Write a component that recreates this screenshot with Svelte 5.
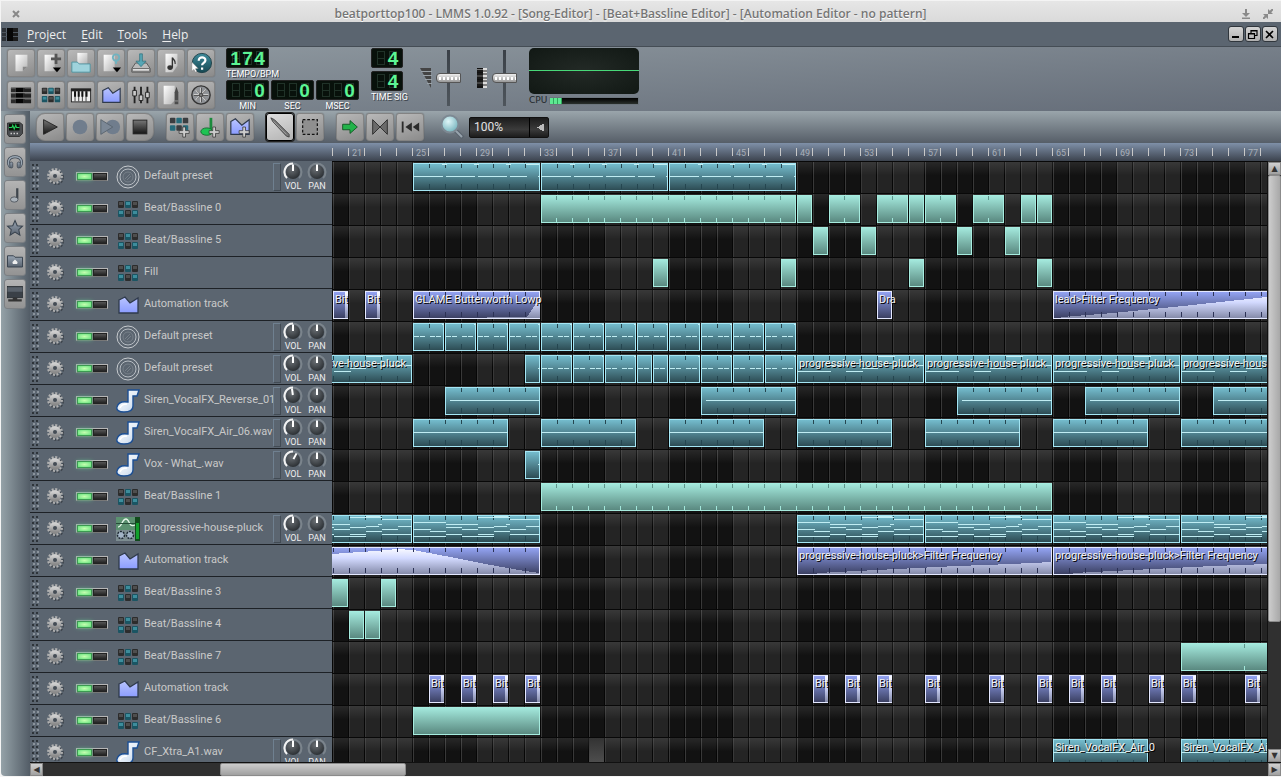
<script lang="ts">
  type Kind = "note" | "bb" | "auto";
  type Clip = {
    from: number;
    to: number;
    kind: Kind;
    art?: string;
    label?: string;
    tick?: number;
  };
  type Track = { name: string; icon: string; vol?: number; clips: Clip[]; cursor?: number };

  const BAR = 16;
  const FIRST_BAR = 20;

  const n = (from: number, to: number, art: string, label = ""): Clip => ({ from, to, kind: "note", art, label, tick: 1 });
  const b = (from: number, to: number, tick = 1): Clip => ({ from, to, kind: "bb", tick });
  const a = (from: number, to: number, art: string, label = ""): Clip => ({ from, to, kind: "auto", art, label, tick: 1 });
  const every = (starts: number[], len: number, art: string) => starts.map((s) => n(s, s + len, art));
  const bits = (starts: number[]) => starts.map((s) => a(s, s + 1, "bit", "Bit"));

  const pluck = "progressive-house-pluck";

  let tracks: Track[] = [
    { name: "Default preset", icon: "preset", vol: 0, clips: every([25, 33, 41], 8, "long") },
    {
      name: "Beat/Bassline 0",
      icon: "beat",
      clips: [b(33, 49), b(49, 50), b(51, 53), b(54, 56), b(56, 57), b(57, 59), b(60, 62), b(63, 64), b(64, 65)],
    },
    { name: "Beat/Bassline 5", icon: "beat", clips: [50, 53, 59, 62].map((s) => b(s, s + 1)) },
    { name: "Fill", icon: "beat", clips: [40, 48, 56, 64].map((s) => b(s, s + 1)) },
    {
      name: "Automation track",
      icon: "auto",
      clips: [
        ...bits([20, 22]),
        a(25, 33, "glame", "GLAME Butterworth Lowp"),
        a(54, 55, "", "Dra"),
        a(65, 81, "lead", "lead>Filter Frequency"),
      ],
    },
    {
      name: "Default preset",
      icon: "preset",
      vol: 0,
      clips: every([25, 27, 29, 31, 33, 35, 37, 39, 41, 43, 45, 47], 2, "short"),
    },
    {
      name: "Default preset",
      icon: "preset",
      vol: 0,
      clips: [
        n(17, 25, "pluck", pluck),
        n(32, 33, "dot"),
        ...every([33, 35, 37], 2, "short"),
        ...every([39, 40], 1, "half"),
        ...every([41, 43, 45, 47], 2, "short"),
        ...[49, 57, 65, 73].map((s) => n(s, s + 8, "pluck", pluck)),
      ],
    },
    { name: "Siren_VocalFX_Reverse_01", icon: "sample", vol: -8, clips: every([27, 43, 59, 67, 75], 6, "rev") },
    { name: "Siren_VocalFX_Air_06.wav", icon: "sample", vol: 0, clips: every([25, 33, 41, 49, 57, 65, 73], 6, "flat") },
    { name: "Vox - What_.wav", icon: "sample", vol: 28, clips: [n(32, 33, "dot")] },
    { name: "Beat/Bassline 1", icon: "beat", clips: [b(33, 65)] },
    { name: pluck, icon: "synth", vol: 0, clips: every([17, 25, 49, 57, 65, 73], 8, "melody") },
    {
      name: "Automation track",
      icon: "auto",
      clips: [
        a(17, 33, "peak"),
        a(49, 65, "rise", pluck + ">Filter Frequency"),
        a(65, 81, "rise", pluck + ">Filter Frequency"),
      ],
    },
    { name: "Beat/Bassline 3", icon: "beat", clips: [b(19, 21, 4), b(23, 24)] },
    { name: "Beat/Bassline 4", icon: "beat", clips: [b(21, 22), b(22, 23)] },
    { name: "Beat/Bassline 7", icon: "beat", clips: [b(73, 81, 4)] },
    {
      name: "Automation track",
      icon: "auto",
      clips: bits([26, 28, 30, 32, 50, 52, 54, 57, 61, 64, 66, 68, 71, 73, 77]),
    },
    { name: "Beat/Bassline 6", icon: "beat", clips: [b(25, 33, 8)] },
    {
      name: "CF_Xtra_A1.wav",
      icon: "sample",
      vol: 0,
      cursor: 36,
      clips: [n(65, 71, "flat", "Siren_VocalFX_Air_0"), n(73, 79, "flat", "Siren_VocalFX_Air_0")],
    },
  ];

  // note bars as [x, y, width] inside a clip
  const notes: Record<string, number[][]> = {
    long: [[0, 13, 30], [33, 13, 29], [65, 13, 29], [97, 13, 17], [125, 13, 2], [29, 1, 5], [61, 1, 5], [93, 1, 5], [113, 1, 13]],
    short: [[1, 13, 5], [7, 13, 5], [17, 13, 5], [23, 13, 5], [29, 1, 2]],
    half: [[1, 13, 5], [7, 13, 5]],
    dot: [[13, 13, 2]],
    pluck: [[0, 16, 34], [49, 16, 17], [33, 10, 16], [65, 13, 16], [81, 1, 17], [97, 10, 30]],
    rev: [[5, 13, 90]],
    flat: [[0, 13, 95]],
    melody: [
      [0, 7, 33], [0, 14, 18], [17, 16, 16], [0, 21, 33], [33, 9, 32], [33, 12, 16], [49, 14, 16],
      [33, 19, 16], [49, 21, 16], [65, 2, 32], [81, 1, 14], [65, 12, 16], [81, 11, 13], [93, 9, 4],
      [65, 19, 16], [81, 16, 16], [65, 21, 16], [97, 4, 30], [97, 14, 16], [113, 11, 14], [97, 19, 30],
    ],
  };

  const curves: Record<string, string> = {
    bit: "12,27 12,1 15,1 15,27",
    glame: "74,27 74,26 114,26 118,20 124,11 127,11 127,27",
    lead: "8,27 8,26 60,22 130,15 214,6 255,2 255,27",
    rise: "20,27 20,26 80,23 160,19 214,17 255,15 255,27",
    peak: "0,27 0,10 47,7 90,4 112,2 128,3 160,9 200,17 240,24 254,26 254,27",
  };

  const labels = Array.from({ length: 15 }, (_, i) => 21 + i * 4);
  const ticks = Array.from({ length: 59 }, (_, i) => FIRST_BAR + i);

  const tools1 = ["new", "template", "open", "recent", "save", "export", "help"];
  const tools2 = ["song", "beat", "piano", "auto", "mixer", "notes", "rack"];
  const sideTabs = ["plugins", "samples", "presets", "star", "home", "computer"];
  const times = [["0", "MIN"], ["0", "SEC"], ["0", "MSEC"]];

  let masterVolume = $state(50);
  let masterPitch = $state(50);
  let zoom = $state("100%");
  let editMode = $state("draw");

  const barX = (bar: number) => (bar - FIRST_BAR) * BAR + 1;
</script>

<svg class="defs" width="0" height="0" aria-hidden="true">
  <defs>
    <linearGradient id="paper" x1="0" y1="0" x2="1" y2="1">
      <stop offset="0" stop-color="#fff" /><stop offset="1" stop-color="#b4b4b4" />
    </linearGradient>
    <linearGradient id="blue" x1="0" y1="0" x2="0" y2="1">
      <stop offset="0" stop-color="#b9c4ff" /><stop offset="1" stop-color="#8b9cff" />
    </linearGradient>
    <linearGradient id="dark" x1="0" y1="0" x2="0" y2="1">
      <stop offset="0" stop-color="#777" /><stop offset="1" stop-color="#151515" />
    </linearGradient>
    <linearGradient id="steel" x1="0" y1="0" x2="0" y2="1">
      <stop offset="0" stop-color="#cfcfcf" /><stop offset="1" stop-color="#8a8a8a" />
    </linearGradient>
    <linearGradient id="slate" x1="0" y1="0" x2="0" y2="1">
      <stop offset="0" stop-color="#98a4b2" /><stop offset="1" stop-color="#59636f" />
    </linearGradient>
    <linearGradient id="teal" x1="0" y1="0" x2="0" y2="1">
      <stop offset="0" stop-color="#3f8c9c" /><stop offset="1" stop-color="#174852" />
    </linearGradient>
    <linearGradient id="note" x1="0" y1="0" x2="1" y2="1">
      <stop offset="0" stop-color="#fff" /><stop offset="0.6" stop-color="#dfe9f5" /><stop offset="1" stop-color="#b4cbe6" />
    </linearGradient>
    <linearGradient id="curve" x1="0" y1="0" x2="0" y2="28" gradientUnits="userSpaceOnUse">
      <stop offset="0" stop-color="#fff" /><stop offset="0.4" stop-color="#d3daff" /><stop offset="1" stop-color="#8086a4" />
    </linearGradient>
    <radialGradient id="knob" cx="0.4" cy="0.3" r="0.8">
      <stop offset="0" stop-color="#6a6f74" /><stop offset="1" stop-color="#24282c" />
    </radialGradient>
    <radialGradient id="lens" cx="0.4" cy="0.35" r="0.7">
      <stop offset="0" stop-color="#dff6f8" /><stop offset="1" stop-color="#6fb0ba" />
    </radialGradient>
  </defs>
</svg>

{#snippet plus()}
  <path d="M15 12h3v4h4v3h-4v4h-3v-4h-4v-3h4z" fill="#ccc" stroke="#333" stroke-width="0.800" />
{/snippet}

{#snippet icon(name: string)}
  <svg class="icon" width="24" height="24" viewBox="0 0 24 24" aria-hidden="true">
    {#if name === "new"}
      <path d="M6 3h13v13l-5 5H6z" fill="url(#paper)" /><path d="M19 16l-5 5v-5z" fill="#888" />
    {:else if name === "template"}
      <path d="M5 3h11v18H5z" fill="url(#paper)" />
      <path d="M16 2h3v4h4v3h-4v4h-3v-4h-4V6h4z" fill="#555" /><path d="M14 17h9l-4.500 5z" fill="#000" />
    {:else if name === "open"}
      <path d="M8 1h11v12H8z" fill="url(#paper)" />
      <path d="M2 11h6l2 2h12v9H2z" fill="#9fd3dc" stroke="#4f929e" />
    {:else if name === "recent"}
      <path d="M4 3h12v18H4z" fill="url(#paper)" />
      <circle cx="17.500" cy="6" r="3.500" fill="none" stroke="#6fb3c0" stroke-width="2" /><path d="M17.500 9v4" stroke="#6fb3c0" stroke-width="2" /><path d="M14 17h9l-4.500 5z" fill="#000" />
    {:else if name === "save"}
      <path d="M6 12h12l4 6v4H2v-4z" fill="#bbb" stroke="#555" /><path d="M2.500 18h19v3h-19z" fill="#ddd" stroke="#666" />
      <path d="M10.500 2h3v8h4l-5.500 6-5.500-6h4z" fill="#57a6b5" stroke="#286c79" stroke-width="0.700" />
    {:else if name === "export"}
      <path d="M6 2h13v13l-5 7H6z" fill="url(#paper)" /><path d="M13.500 6v11M13.500 6c1 3 4 3 3 7" stroke="#333" stroke-width="1.500" fill="none" />
      <ellipse cx="11" cy="17" rx="3" ry="2.500" fill="#333" />
    {:else if name === "help"}
      <circle cx="13" cy="12" r="10.500" fill="url(#teal)" stroke="#1c3f48" />
      <path d="M9.500 9.500c0-5 7.500-4.500 7.300-.4-.1 2.800-3.600 2.700-3.600 5.400M13.200 17v2.300" fill="none" stroke="#fff" stroke-width="2.400" />
      <path d="M2 11l7 7-3 .3 1.500 3-1.700.7-1.500-3L2 21z" fill="#fff" stroke="#777" stroke-width="0.500" />
    {:else if name === "song"}
      {#each [4, 10, 16] as y}
        <path d={`M1 ${y}h5v5H1z`} fill="#2b2b2b" /><path d={`M6 ${y}h9v5H6z`} fill="#050505" /><path d={`M15 ${y}h8v5h-8z`} fill="#222" />
        <path d={`M1 ${y + 0.5}h5M16 ${y + 0.5}h7`} stroke="#666" />
      {/each}
    {:else if name === "beat"}
      {#each [0, 1, 2, 3, 4, 5] as i}
        {@const x = 2 + (i % 3) * 7}
        {@const y = i < 3 ? 4 : 13}
        <rect {x} {y} width="6" height="7" rx="1" fill={i % 2 ? "#1b5563" : "#2c2c2c"} />
        <rect x={x + 1} y={y + 1} width="4" height="3" fill={i % 2 ? "#3d8d9c" : "#4e4e4e"} />
      {/each}
    {:else if name === "piano"}
      <rect x="1.500" y="5.500" width="21" height="14" fill="#eee" stroke="#222" />
      <path d="M1 6.500h22" stroke="#222" stroke-width="3" />
      <path d="M5.500 7v12M9.500 7v12M13.500 7v12M17.500 7v12" stroke="#333" /><path d="M5.500 8v6M9.500 8v6M13.500 8v6M18 8v6" stroke="#111" stroke-width="2.200" />
    {:else if name === "auto"}
      <path d="M3 7l6-3 5 6 8-5v15H3z" fill="url(#blue)" stroke="#2f3a4c" stroke-width="1.300" />
    {:else if name === "mixer"}
      <path d="M5 3v18M12 3v18M19 3v18" stroke="#222" stroke-width="2" />
      <path d="M3 7h4v6H3zM10 12h4v6h-4zM17 9h4v6h-4z" fill="#ccc" stroke="#222" />
    {:else if name === "notes"}
      <path d="M4 2h12v16l-4 4H4z" fill="url(#paper)" /><path d="M16 9l2-6 2 6v13h-4z" fill="#4c4c4c" /><path d="M16 18.500h4" stroke="#999" />
    {:else if name === "rack"}
      <circle cx="12" cy="12" r="10" fill="#8f9296" stroke="#333" stroke-width="1.500" />
      <path d="M12 4v16M4 12h16M6.500 6.500l11 11M17.500 6.500l-11 11" stroke="#d5d5d5" stroke-width="2" />
      <path d="M12.500 4v16M4 12.500h16M7 6.500l11 11M18 6.500l-11 11" stroke="#444" stroke-width="1" /><circle cx="12" cy="12" r="2" fill="#777" stroke="#444" />
    {:else if name === "play"}
      <path d="M5 4l15 8-15 8z" fill="url(#dark)" stroke="#222" />
    {:else if name === "record"}
      <circle cx="12" cy="12" r="8" fill="#707d8d" />
    {:else if name === "recordplay"}
      <circle cx="15" cy="12" r="8" fill="#707d8d" /><path d="M2 4l13 8-13 8z" fill="#7c8896" stroke="#59646f" />
    {:else if name === "stop"}
      <rect x="4.500" y="4.500" width="15" height="15" fill="url(#dark)" stroke="#222" />
    {:else if name === "addbeat"}
      {#each [0, 1, 2, 3, 4, 5] as i}
        <rect x={1 + (i % 3) * 7} y={i < 3 ? 2 : 10} width="6" height="6" rx="1" fill={i % 2 ? "#256b7b" : "#3a3d40"} />
      {/each}
      {@render plus()}
    {:else if name === "addsample"}
      <path d="M13 2v14" stroke="#1b8a3c" stroke-width="3" /><ellipse cx="8.500" cy="17" rx="6.500" ry="4" fill="#1fc353" stroke="#146c30" />
      {@render plus()}
    {:else if name === "addauto"}
      <path d="M2 6l5-3 7 7 8-6v16H2z" fill="url(#blue)" stroke="#2f3a4c" stroke-width="1.300" />
      {@render plus()}
    {:else if name === "pencil"}
      <path d="M2 2l4 2 16 16v3l-3-1L4 6z" fill="#777" stroke="#333" stroke-width="0.800" /><path d="M5 6l14 14" stroke="#a5a5a5" />
    {:else if name === "select"}
      <rect x="4" y="4" width="16" height="16" fill="#8f8f8f" stroke="#111" stroke-width="1.300" stroke-dasharray="3 2" />
    {:else if name === "follow"}
      <path d="M4 9h8V5l8 7-8 7v-4H4z" fill="#22b34a" stroke="#125523" />
    {:else if name === "loop"}
      <path d="M4 4l8 8-8 8zM20 4l-8 8 8 8z" fill="#6a6a6a" stroke="#2b2b2b" />
    {:else if name === "rewind"}
      <path d="M4 6v12" stroke="#2b2b2b" stroke-width="2" /><path d="M14 7v10l-7-5zM22 7v10l-7-5z" fill="#2b2b2b" />
    {:else if name === "plugins"}
      <path d="M2 4l16-1 4 3v12l-4 4H4l-2-3z" fill="#4a4d50" stroke="#222" /><rect x="4" y="5" width="14" height="9" fill="#071207" />
      <path d="M4 10h4l1-3 2 5 2-5 1 3h4" stroke="#22d05a" fill="none" stroke-width="1.400" /><path d="M6 18h2M10 18h2M14 18h2" stroke="#ccc" stroke-width="2" />
    {:else if name === "samples"}
      <path d="M6 19c-5-6-3-14 6-14s11 8 6 14" fill="none" stroke="#3d4752" stroke-width="4" /><path d="M6 19c-5-6-3-14 6-14s11 8 6 14" fill="none" stroke="#9aa6b2" stroke-width="2" />
      <rect x="5" y="12" width="4" height="8" rx="2" fill="url(#slate)" stroke="#3d4752" /><rect x="15" y="12" width="4" height="8" rx="2" fill="url(#slate)" stroke="#3d4752" />
    {:else if name === "presets"}
      <path d="M15 3v14" stroke="#3f464d" stroke-width="3" /><ellipse cx="11" cy="18" rx="5" ry="3.500" fill="#aab2ba" stroke="#3f464d" />
    {:else if name === "star"}
      <path d="M12 2l3 7 7 .6-5 4.700 1.500 7.200-6.500-4-6.500 4 1.500-7.200L2 9.600 9 9z" fill="url(#slate)" stroke="#39434e" stroke-width="1.400" />
    {:else if name === "home"}
      <path d="M2 5h8l2 2h10v13H2z" fill="url(#slate)" stroke="#39434e" stroke-width="1.300" /><path d="M8 14l4-4 4 4h-1v2H9v-2z" fill="#eee" />
    {:else if name === "computer"}
      <rect x="2" y="2" width="20" height="15" fill="#3a4047" stroke="#23282d" /><path d="M2 3h20v6H2z" fill="#59616a" /><path d="M9 17h6v2h6v3H3v-3h6z" fill="#333" />
    {:else if name === "preset"}
      <g fill="none" stroke="#c6cace">
        <circle cx="12" cy="12" r="11" /><circle cx="12" cy="12" r="8" stroke="#b8bec4" /><circle cx="12" cy="12" r="5" stroke="#778089" /><path d="M9 14l5-5M11 15l4-4" stroke="#778089" />
      </g>
    {:else if name === "sample"}
      <path d="M12 1h11l-2 6h-4v10c0 4-4 6-9 6-5 0-8-2-7-5 1-4 5-6 11-5z" fill="url(#note)" stroke="#1c4f94" stroke-width="1.400" />
      <path d="M4 19c1-3 4-4 7-4" stroke="#fff" stroke-width="1.500" fill="none" />
    {:else if name === "synth"}
      <rect width="24" height="24" fill="#7d8d91" /><rect width="19" height="13" fill="#5b9170" />
      <path d="M2 10c4 0 4-8 8-8s2 9 9 6" fill="none" stroke="#e4f6e9" stroke-width="1.300" /><path d="M0 6.500h19" stroke="#254d37" />
      <circle cx="5" cy="18" r="3.500" fill="#a3b4c6" stroke="#1d2833" stroke-dasharray="2 1" stroke-width="1.500" />
      <circle cx="14" cy="18" r="3.500" fill="#a3b4c6" stroke="#1d2833" stroke-dasharray="2 1" stroke-width="1.500" />
      <rect x="19" width="5" height="24" fill="#124a1d" /><rect x="20" y="6" width="3" height="16" fill="#13a02d" />
    {/if}
  </svg>
{/snippet}

{#snippet tool(name: string, extra: string)}
  <button class={"tool " + extra} aria-label={name}>{@render icon(name)}</button>
{/snippet}

{#snippet lcd(value: string, digits: number)}
  <output class="lcd">
    {#each Array(digits) as _, i}
      <span class="digit">{value[i - digits + value.length] ?? ""}</span>
    {/each}
  </output>
{/snippet}

{#snippet knob(label: string, angle: number)}
  <label class="knob">
    <svg width="20" height="19" viewBox="0 0 20 19" aria-hidden="true">
      <path d="M4 16a8.500 8.500 0 1 1 12 0" fill="none" stroke="#7b848c" stroke-width="2" />
      {#if label === "VOL"}
        <path d="M4 16a8.500 8.500 0 0 1 6-14.500" fill="none" stroke="#f2f2f2" stroke-width="2" />
      {/if}
      <circle cx="10" cy="10" r="7" fill="url(#knob)" />
      <path d="M10 9V2.500" stroke="#fff" stroke-width="2" transform={`rotate(${angle} 10 10)`} />
    </svg>
    <input type="range" min="-100" max="100" value={angle} />
    <span>{label}</span>
  </label>
{/snippet}

<div class="window">
  <header class="titlebar">
    <button class="plain" aria-label="Close window">
      <svg width="8" height="8" viewBox="0 0 8 8"><path d="M1 1l6 6M7 1L1 7" stroke="#888" stroke-width="2" /></svg>
    </button>
    <h1>beatporttop100 - LMMS 1.0.92 - [Song-Editor] - [Beat+Bassline Editor] - [Automation Editor - no pattern]</h1>
    <button class="plain" aria-label="Minimize window">
      <svg width="10" height="10" viewBox="0 0 10 10"><path d="M5 0v4M1 9.500h8" stroke="#8a8a8a" stroke-width="2" /><path d="M1 4h8L5 8z" fill="#8a8a8a" /></svg>
    </button>
    <button class="plain" aria-label="Restore window">
      <svg width="10" height="10" viewBox="0 0 10 10"><path d="M10 0L6 4M0 10l4-4" stroke="#8a8a8a" stroke-width="2" /><path d="M5 0v5h5zM5 10V5H0z" fill="#8a8a8a" /></svg>
    </button>
  </header>

  <nav class="menubar">
    <svg width="16" height="13" viewBox="0 0 16 13" aria-hidden="true">
      <path d="M0 0h4v13H0z" fill="#2c3137" /><path d="M5 0h6v13H5z" fill="#070707" /><path d="M11 0h5v13h-5z" fill="#1b1b1b" />
      <path d="M0 4.500h5M0 8.500h5M11 4.500h5M11 8.500h5" stroke="#4d555e" />
    </svg>
    {#each ["Project", "Edit", "Tools", "Help"] as item}
      <button class="menu"><u>{item[0]}</u>{item.slice(1)}</button>
    {/each}
    <span class="spacer"></span>
    <button class="mdi" aria-label="Minimize">
      <svg width="13" height="13" viewBox="0 0 13 13"><path d="M3 9h7" stroke="#000" stroke-width="2" /></svg>
    </button>
    <button class="mdi" aria-label="Restore">
      <svg width="13" height="13" viewBox="0 0 13 13"><path d="M5 5V2.500h6v5H9M2.500 5.500h6v5h-6zM2 6h7M5 3h6" fill="none" stroke="#000" stroke-width="1.200" /></svg>
    </button>
    <button class="mdi" aria-label="Close">
      <svg width="13" height="13" viewBox="0 0 13 13"><path d="M3 3l7 7M10 3l-7 7" stroke="#000" stroke-width="1.600" /></svg>
    </button>
  </nav>

  <section class="toolbar">
    <div class="tool-grid">
      {#each [...tools1, ...tools2] as name}
        {@render tool(name, "")}
      {/each}
    </div>

    <div class="tempo">
      <div class="readout wide">{@render lcd("174", 3)}<span>TEMPO/BPM</span></div>
      <div class="times">
        {#each times as [value, label]}
          <div class="readout">{@render lcd(value, 3)}<span>{label}</span></div>
        {/each}
      </div>
    </div>

    <div class="timesig">
      {@render lcd("4", 2)}
      {@render lcd("4", 2)}
      <span>TIME SIG</span>
    </div>

    <label class="slider">
      <svg width="12" height="20" viewBox="0 0 12 20" role="img" aria-label="Master volume">
        <path d="M0 0h11v20z" fill="#444" /><path d="M1 3.500h11M3 7.500h9M5 11.500h7M7 15.500h5" stroke="#9aa2a8" />
      </svg>
      <input type="range" bind:value={masterVolume} />
    </label>
    <label class="slider">
      <svg width="12" height="20" viewBox="0 0 12 20" role="img" aria-label="Master pitch">
        <path d="M1 0h10v20H1z" fill="#ddd" /><path d="M1 0h6v20H1z" fill="#111" />
        <path d="M1 3h10M1 6h10M1 10h10M1 13h10M1 17h10" stroke="#222" /><path d="M1 1.500h6M1 8h6M1 15h6" stroke="#777" />
      </svg>
      <input type="range" bind:value={masterPitch} />
    </label>

    <div class="scope">
      <div class="screen"></div>
      <div class="cpu"><span>CPU</span><div class="load"><i></i></div></div>
    </div>
  </section>

  <div class="body">
    <aside class="side">
      {#each sideTabs as name}
        <button class="tab" aria-label={name}>{@render icon(name)}</button>
      {/each}
    </aside>

    <main class="editor">
      <div class="song-tools">
        <div class="group">
          {@render tool("play", "round-left")}
          {@render tool("record", "")}
          {@render tool("recordplay", "")}
          {@render tool("stop", "round-right")}
        </div>
        <div class="group">
          {@render tool("addbeat", "")}
          {@render tool("addsample", "")}
          {@render tool("addauto", "")}
        </div>
        <div class="group">
          <button class="tool" class:active={editMode === "draw"} aria-label="Draw mode" onclick={() => (editMode = "draw")}>
            {@render icon("pencil")}
          </button>
          <button class="tool" class:active={editMode === "edit"} aria-label="Edit mode" onclick={() => (editMode = "edit")}>
            {@render icon("select")}
          </button>
        </div>
        <div class="group">
          {@render tool("follow", "")}
          {@render tool("loop", "")}
          {@render tool("rewind", "")}
        </div>
        <label class="zoom">
          <svg width="26" height="26" viewBox="0 0 26 26" role="img" aria-label="Zoom">
            <path d="M16 16l8 8" stroke="#59636d" stroke-width="4" /><path d="M16 16l7 7" stroke="#98a3ad" stroke-width="2" />
            <circle cx="11" cy="10" r="8.500" fill="url(#lens)" stroke="#7d8993" stroke-width="2" />
          </svg>
          <select bind:value={zoom}>
            <option>50%</option>
            <option>100%</option>
            <option>200%</option>
          </select>
        </label>
      </div>

      <div class="ruler">
        <div class="marks">
          {#each ticks as bar}
            <i style="left: {barX(bar) - 1}px"></i>
          {/each}
          {#each labels as bar}
            <span style="left: {barX(bar) + 3}px">{bar}</span>
          {/each}
        </div>
      </div>

      <div class="scroll-row">
        <div class="tracks">
          {#each tracks as track}
            <div class="track">
              <div class="head">
                <span class="grip"></span>
                <button class="plain gear" aria-label="Track actions">
                  <svg width="17" height="17" viewBox="0 0 17 17">
                    <circle cx="9.500" cy="9.500" r="6.500" fill="none" stroke="#3f464e" stroke-width="2" stroke-dasharray="2 1.400" />
                    <circle cx="8" cy="8" r="6.700" fill="none" stroke="#b0b0b0" stroke-width="2.500" stroke-dasharray="2 1.508" />
                    <circle cx="8" cy="8" r="4" fill="none" stroke="url(#steel)" stroke-width="4" />
                    <circle cx="8" cy="8" r="1.800" fill="#454c54" />
                  </svg>
                </button>
                <span class="leds">
                  <input type="checkbox" checked aria-label="Active" />
                  <input type="checkbox" aria-label="Solo" />
                </span>
                {@render icon(track.icon)}
                <span class="name">{track.name}</span>
                {#if track.vol !== undefined}
                  <span class="peak"></span>
                  {@render knob("VOL", track.vol)}
                  {@render knob("PAN", 0)}
                {/if}
              </div>
              <div class="lane">
                {#if track.cursor}
                  <div class="cursor" style="left: {barX(track.cursor)}px"></div>
                {/if}
                {#each track.clips as clip}
                  {@const width = (clip.to - clip.from) * BAR - 1}
                  {@const step = clip.tick ?? 1}
                  <div class={"clip " + clip.kind} style="left: {barX(clip.from)}px; width: {width}px">
                    <svg {width} height="28" aria-hidden="true" shape-rendering="crispEdges">
                      {#if clip.kind === "auto" && curves[clip.art ?? ""]}
                        <polygon points={curves[clip.art ?? ""]} fill="url(#curve)" />
                      {/if}
                      {#each Array(Math.max(0, Math.ceil((clip.to - clip.from) / step) - 1)) as _, i}
                        {@const x = (i + 1) * step * BAR - (clip.kind === "bb" ? 1 : 0)}
                        <rect class="tick-top" {x} y="1" width="1" height="4" />
                        <rect class="tick-bottom" {x} y={clip.kind === "bb" ? 23 : 21} width="1" height={clip.kind === "bb" ? 4 : 5} />
                      {/each}
                      {#each notes[clip.art ?? ""] ?? [] as [x, y, w]}
                        <rect class="note-bar" {x} {y} width={w} height="1" />
                      {/each}
                    </svg>
                    {#if clip.label}<span>{clip.label}</span>{/if}
                  </div>
                {/each}
              </div>
            </div>
          {/each}
        </div>
        <div class="vbar">
          <button aria-label="Scroll up">▲</button>
          <div class="rail"><i></i><b></b></div>
          <button aria-label="Scroll down">▼</button>
        </div>
      </div>

      <div class="hbar">
        <button aria-label="Scroll left">◀</button>
        <div class="rail"><i></i><b></b></div>
        <button aria-label="Scroll right">▶</button>
      </div>
    </main>
  </div>
</div>

<style>
  :global(body) {
    background: #f4f4f4;
  }

  .defs {
    position: absolute;
  }

  .window {
    display: flex;
    flex-direction: column;
    height: 100vh;
    box-sizing: border-box;
    padding: 1px 0 1px 1px;
    overflow: hidden;
    font-family: Roboto, "Open Sans", sans-serif;
    font-size: 11px;
    color: #d8d8d8;
  }

  button {
    font: inherit;
    color: inherit;
    padding: 0;
    margin: 0;
    border: 0;
  }

  svg {
    display: block;
    flex: none;
  }

  .plain {
    background: none;
  }

  .spacer {
    flex: 1;
  }

  .titlebar {
    display: flex;
    align-items: center;
    gap: 12px;
    height: 21px;
    flex: none;
    padding: 4px 8px 0 11px;
    box-sizing: border-box;
    background: linear-gradient(#e6e6e6, #dadada);
  }

  .titlebar h1 {
    flex: 1;
    margin: 0;
    text-align: center;
    font-family: "Open Sans", sans-serif;
    font-size: 12px;
    font-weight: 600;
    color: #757575;
    text-shadow: 0 1px #fff;
    white-space: nowrap;
  }

  .menubar {
    display: flex;
    align-items: center;
    height: 25px;
    flex: none;
    box-sizing: border-box;
    padding: 0 3px 0 1px;
    background: #5b6570;
    border-bottom: 1px solid #454d55;
  }

  .menu {
    margin-left: 9px;
    margin-right: 6px;
    background: none;
    font-family: "Open Sans", sans-serif;
    font-size: 12px;
    color: #eee;
  }

  .menu u {
    text-underline-offset: 2px;
  }

  .mdi {
    width: 16px;
    height: 16px;
    margin-left: 1px;
    box-sizing: border-box;
    border: 1px solid #30363c;
    border-radius: 3px;
    background: linear-gradient(#d4d4d4, #b0b0b0);
  }

  .toolbar {
    display: flex;
    height: 64px;
    flex: none;
    box-sizing: border-box;
    padding: 2px 0 0 6px;
    background: linear-gradient(176deg, #909aa1, #646c78);
  }

  .tool-grid {
    display: grid;
    grid-template-columns: repeat(7, 28px);
    grid-auto-rows: 28px;
    gap: 4px 2px;
  }

  .tool {
    display: flex;
    align-items: center;
    justify-content: center;
    width: 28px;
    height: 28px;
    box-sizing: border-box;
    border: 1px solid #838383;
    border-radius: 3px;
    background: linear-gradient(160deg, #b9b9b9, #8b8b8b);
    box-shadow: 0 0 1px #555;
  }

  .tool .icon {
    width: 22px;
    height: 22px;
  }

  .tool.round-left {
    border-radius: 9px 3px 3px 9px;
  }

  .tool.round-right {
    border-radius: 3px 9px 9px 3px;
  }

  .tool.active {
    background: linear-gradient(160deg, #dedede, #b4b4b4);
    border: 1px solid #000;
    box-shadow: 0 0 0 1px #222;
  }

  .tempo {
    margin: -1px 0 0 11px;
  }

  .times {
    display: flex;
    gap: 2px;
  }

  .readout {
    display: flex;
    flex-direction: column;
    align-items: center;
    width: 43px;
    height: 32px;
    font-size: 9px;
    line-height: 12px;
    color: #fff;
    text-shadow: 1px 1px #3b424a;
    white-space: nowrap;
  }

  .readout.wide {
    align-items: flex-start;
  }

  .lcd {
    display: flex;
    justify-content: center;
    width: 43px;
    height: 20px;
    box-sizing: border-box;
    border: 1px solid #222;
    border-radius: 2px;
    background: #08110b;
  }

  .timesig .lcd {
    width: 32px;
  }

  .digit {
    width: 12px;
    height: 18px;
    background:
      linear-gradient(#203228, #203228) 2px 2px / 8px 1px no-repeat,
      linear-gradient(#203228, #203228) 2px 9px / 8px 1px no-repeat,
      linear-gradient(#203228, #203228) 2px 15px / 8px 1px no-repeat,
      linear-gradient(#203228, #203228) 2px 2px / 1px 14px no-repeat,
      linear-gradient(#203228, #203228) 9px 2px / 1px 14px no-repeat;
    font-family: "Liberation Sans", sans-serif;
    font-weight: 700;
    font-size: 19px;
    line-height: 19px;
    text-align: center;
    color: #5cf594;
    text-shadow: none;
  }

  .timesig {
    display: flex;
    flex-direction: column;
    gap: 3px;
    width: 34px;
    margin: -1px 0 0 12px;
    font-size: 9px;
    line-height: 12px;
    color: #fff;
    text-shadow: 1px 1px #3b424a;
    white-space: nowrap;
  }

  .timesig > span {
    margin-top: -3px;
  }

  .slider {
    display: flex;
    align-items: center;
    gap: 3px;
    height: 58px;
    margin-left: 15px;
  }

  .slider input {
    writing-mode: vertical-lr;
    appearance: none;
    width: 26px;
    height: 56px;
    margin: 0;
    background: linear-gradient(#3a4047, #4e555c) center / 3px 100% no-repeat;
  }

  .slider input::-webkit-slider-thumb {
    appearance: none;
    width: 25px;
    height: 10px;
    border: 1px solid #555;
    border-radius: 4px 1px 1px 4px;
    background:
      radial-gradient(#fff 1px, transparent 1px) 5px 2px / 4px 5px repeat-x,
      linear-gradient(#eee, #999);
  }

  .scope {
    width: 110px;
    margin: -1px 0 0 12px;
  }

  .screen {
    height: 46px;
    border-radius: 5px;
    background:
      linear-gradient(#48d878, #48d878) 0 22px / 100% 1px no-repeat,
      radial-gradient(#232a26, #111814);
  }

  .cpu {
    display: flex;
    align-items: center;
    gap: 2px;
    margin-top: 1px;
    font: 9px/11px "DejaVu Sans", sans-serif;
    color: #20262a;
  }

  .load {
    flex: 1;
    height: 6px;
    border: 1px solid #6c757d;
    background: linear-gradient(#000, #2a302d);
  }

  .load i {
    display: block;
    width: 12px;
    height: 6px;
    background: repeating-linear-gradient(90deg, #5ee992 0 3px, #31a65d 3px 4px);
  }

  .body {
    display: flex;
    flex: 1;
    min-height: 0;
  }

  .side {
    display: flex;
    flex-direction: column;
    gap: 3px;
    width: 29px;
    flex: none;
    box-sizing: border-box;
    padding: 3px 4px 0 3px;
    background: linear-gradient(90deg, #95a2a8, #525c66);
    border-radius: 0 0 0 4px;
  }

  .tab {
    display: flex;
    align-items: center;
    justify-content: center;
    height: 30px;
    border: 1px solid #7b7f83;
    border-radius: 3px;
    background: linear-gradient(#b4b4b4, #939393);
    box-sizing: border-box;
  }

  .tab .icon {
    width: 18px;
    height: 18px;
  }

  .editor {
    display: flex;
    flex-direction: column;
    flex: 1;
    min-width: 0;
    background: #5b6570;
  }

  .song-tools {
    display: flex;
    align-items: center;
    gap: 12px;
    height: 32px;
    flex: none;
    padding-left: 6px;
    background: linear-gradient(#9aa5ab, #565e68);
  }

  .group {
    display: flex;
    gap: 2px;
  }

  .zoom {
    display: flex;
    align-items: center;
    gap: 4px;
    margin-left: 3px;
  }

  .zoom select {
    appearance: none;
    width: 80px;
    height: 21px;
    padding: 0 4px;
    border: 1px solid #111;
    border-radius: 2px;
    background:
      conic-gradient(from 60deg at 0 50%, #bbb 60deg, transparent 0) 67px 5px / 7px 9px no-repeat,
      linear-gradient(#000, #000) 59px 0 / 1px 100% no-repeat,
      linear-gradient(#1c1c1c, #3b3b3b 60%, #1c1c1c);
    font: 12px Roboto, sans-serif;
    color: #e2e2e2;
  }

  .ruler {
    height: 18px;
    flex: none;
    padding-left: 302px;
    background: linear-gradient(#7f90a8, #3c434e);
  }

  .marks {
    position: relative;
    height: 18px;
    overflow: hidden;
    font-size: 9px;
    line-height: 18px;
    color: #a9b0ba;
  }

  .marks i,
  .marks span {
    position: absolute;
    top: 1px;
  }

  .marks i {
    top: 5px;
    width: 1px;
    height: 8px;
    background: #c8c8c8;
  }

  .scroll-row {
    display: flex;
    flex: 1;
    min-height: 0;
  }

  .tracks {
    flex: 1;
    min-width: 0;
    overflow: hidden;
  }

  .track {
    display: flex;
    height: 32px;
  }

  .head {
    display: grid;
    grid-template-columns: 15px 29px 40px 28px 129px 8px 24px 24px;
    align-items: center;
    width: 302px;
    flex: none;
    box-sizing: border-box;
    padding-left: 2px;
    border-bottom: 1px solid #1d2126;
    background: #5b6570;
    color: #c9c9c9;
  }

  .grip {
    width: 8px;
    height: 26px;
    background:
      radial-gradient(circle at 1px 1px, #2e343a 1px, transparent 1px) 0 0 / 4px 6px,
      radial-gradient(circle at 1px 1px, #8b949d 1px, transparent 1px) 1px 3px / 4px 6px;
  }

  .gear {
    width: 17px;
    height: 17px;
  }

  .leds {
    display: flex;
    width: 32px;
    height: 9px;
    box-sizing: border-box;
    border: 1px solid #b6b6b6;
    border-bottom-color: #777;
    background: #7c7c7c;
    gap: 1px;
  }

  .leds input {
    appearance: none;
    flex: 1;
    margin: 0;
    border: 1px solid #222;
    background: linear-gradient(#555, #222);
  }

  .leds input:checked {
    border-color: #3d9a52;
    background: radial-gradient(#c5ffb0, #63e27d);
    box-shadow: 0 0 4px #62b98a;
  }

  .name {
    align-self: stretch;
    line-height: 30px;
    white-space: nowrap;
  }

  .peak {
    height: 28px;
    width: 8px;
    box-sizing: border-box;
    border: 1px solid #6f8090;
    border-right-color: #424b54;
    border-bottom-color: #424b54;
  }

  .knob {
    position: relative;
    display: flex;
    flex-direction: column;
    align-items: center;
    height: 30px;
    font-size: 9px;
    line-height: 11px;
    color: #eee;
  }

  .knob input {
    position: absolute;
    inset: 0;
    width: 100%;
    margin: 0;
    opacity: 0;
  }

  .lane {
    position: relative;
    flex: 1;
    min-width: 0;
    overflow: hidden;
    background:
      linear-gradient(#080808, #080808) 0 0 / 100% 1px no-repeat,
      linear-gradient(rgba(255, 255, 255, 0.1), transparent 45%),
      repeating-linear-gradient(90deg, #383838 0 1px, transparent 1px 15px, #060606 15px 16px) 1px 0 / 1280px 100%,
      repeating-linear-gradient(90deg, #121212 0 64px, #242424 64px 128px) -47px 0 / 2560px 100%;
  }

  .cursor {
    position: absolute;
    top: 1px;
    width: 15px;
    height: 31px;
    background: linear-gradient(#333, #555);
  }

  .clip {
    position: absolute;
    top: 2px;
    height: 28px;
    box-sizing: border-box;
    border: 1px solid #a4e6f4;
    background: linear-gradient(#74bccd, #2d4c54);
  }

  .clip svg {
    margin: -1px;
  }

  .clip span {
    position: absolute;
    top: 0;
    left: 1px;
    line-height: 16px;
    color: #f2f2f2;
    text-shadow: 1px 1px #000;
    white-space: nowrap;
  }

  .clip.bb {
    border-color: #a6ecdf;
    background: linear-gradient(#a3e8dc, #5a8980);
  }

  .clip.auto {
    border-color: #e4e8ff;
    background: linear-gradient(#93a3f2, #3b4062);
  }

  .tick-top,
  .tick-bottom {
    fill: #254650;
  }

  .bb .tick-top {
    fill: #5f958c;
  }

  .bb .tick-bottom {
    fill: #a3e8dc;
  }

  .auto .tick-top,
  .auto .tick-bottom {
    fill: #2c3255;
  }

  .note-bar {
    fill: #c0edf3;
  }

  .vbar,
  .hbar {
    display: flex;
    flex: none;
    background: #303030;
  }

  .vbar {
    flex-direction: column;
    width: 13px;
    padding-top: 1px;
    border-left: 1px solid #111;
  }

  .hbar {
    height: 13px;
    border-top: 1px solid #111;
  }

  .vbar button,
  .hbar button {
    width: 13px;
    height: 13px;
    box-sizing: border-box;
    border: 1px solid #888;
    background: linear-gradient(#d0d0d0, #a0a0a0);
    color: #333;
    font: 8px/10px "DejaVu Sans", sans-serif;
  }

  .rail {
    display: flex;
    flex: 1;
  }

  .vbar .rail {
    flex-direction: column;
  }

  .rail b {
    border-radius: 2px;
    border: 1px solid #8b8b8b;
  }

  .vbar .rail i {
    flex: 0;
  }

  .vbar .rail b {
    flex: 447;
    background: linear-gradient(90deg, #ccc, #a8a8a8);
  }

  .vbar .rail::after {
    content: "";
    flex: 127;
  }

  .hbar .rail i {
    flex: 177;
  }

  .hbar .rail b {
    flex: 185;
    background: linear-gradient(#ccc, #a0a0a0);
  }

  .hbar .rail::after {
    content: "";
    flex: 863;
  }
</style>
